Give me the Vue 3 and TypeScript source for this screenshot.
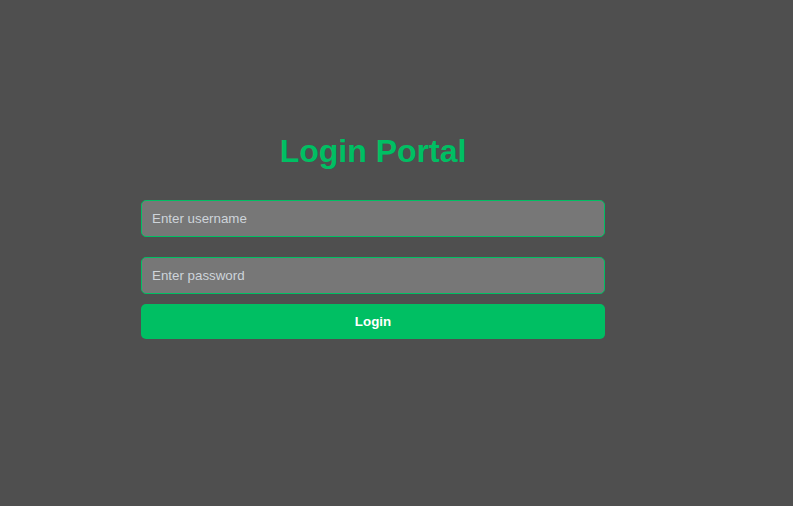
<script setup lang="ts">
import { ref } from 'vue'

const username = ref('')
const password = ref('')
</script>

<template>
  <main class="page">
    <form class="login" @submit.prevent>
      <h1>Login Portal</h1>
      <div class="fields">
        <input v-model="username" class="field" type="text" placeholder="Enter username" aria-label="Username" />
        <input v-model="password" class="field" type="password" placeholder="Enter password" aria-label="Password" />
      </div>
      <button type="submit">Login</button>
    </form>
  </main>
</template>

<style>
body {
  background: #4f4f4f;
}
</style>

<style scoped>
.page {
  box-sizing: border-box;
  min-height: 100vh;
  padding: 133px 188px 40px 141px;
  font-family: "Liberation Sans", Arial, sans-serif;
}

.login {
  display: flex;
  flex-direction: column;
}

h1 {
  margin: 0 0 30px;
  color: #00bf63;
  font-size: 32px;
  line-height: 37px;
  text-align: center;
}

.fields {
  display: flex;
  flex-direction: column;
  gap: 20px;
  margin-bottom: 10px;
}

.field {
  padding: 10px;
  border: 1px solid #00bf63;
  border-radius: 5px;
  outline: none;
  background: #777777;
  color: #ffffff;
  font-family: inherit;
}

.field::placeholder {
  color: #ced4da;
}

button {
  padding: 10px;
  border: 0;
  border-radius: 5px;
  background: #00bf63;
  color: #ffffff;
  font-family: inherit;
  font-weight: bold;
  cursor: pointer;
}
</style>
